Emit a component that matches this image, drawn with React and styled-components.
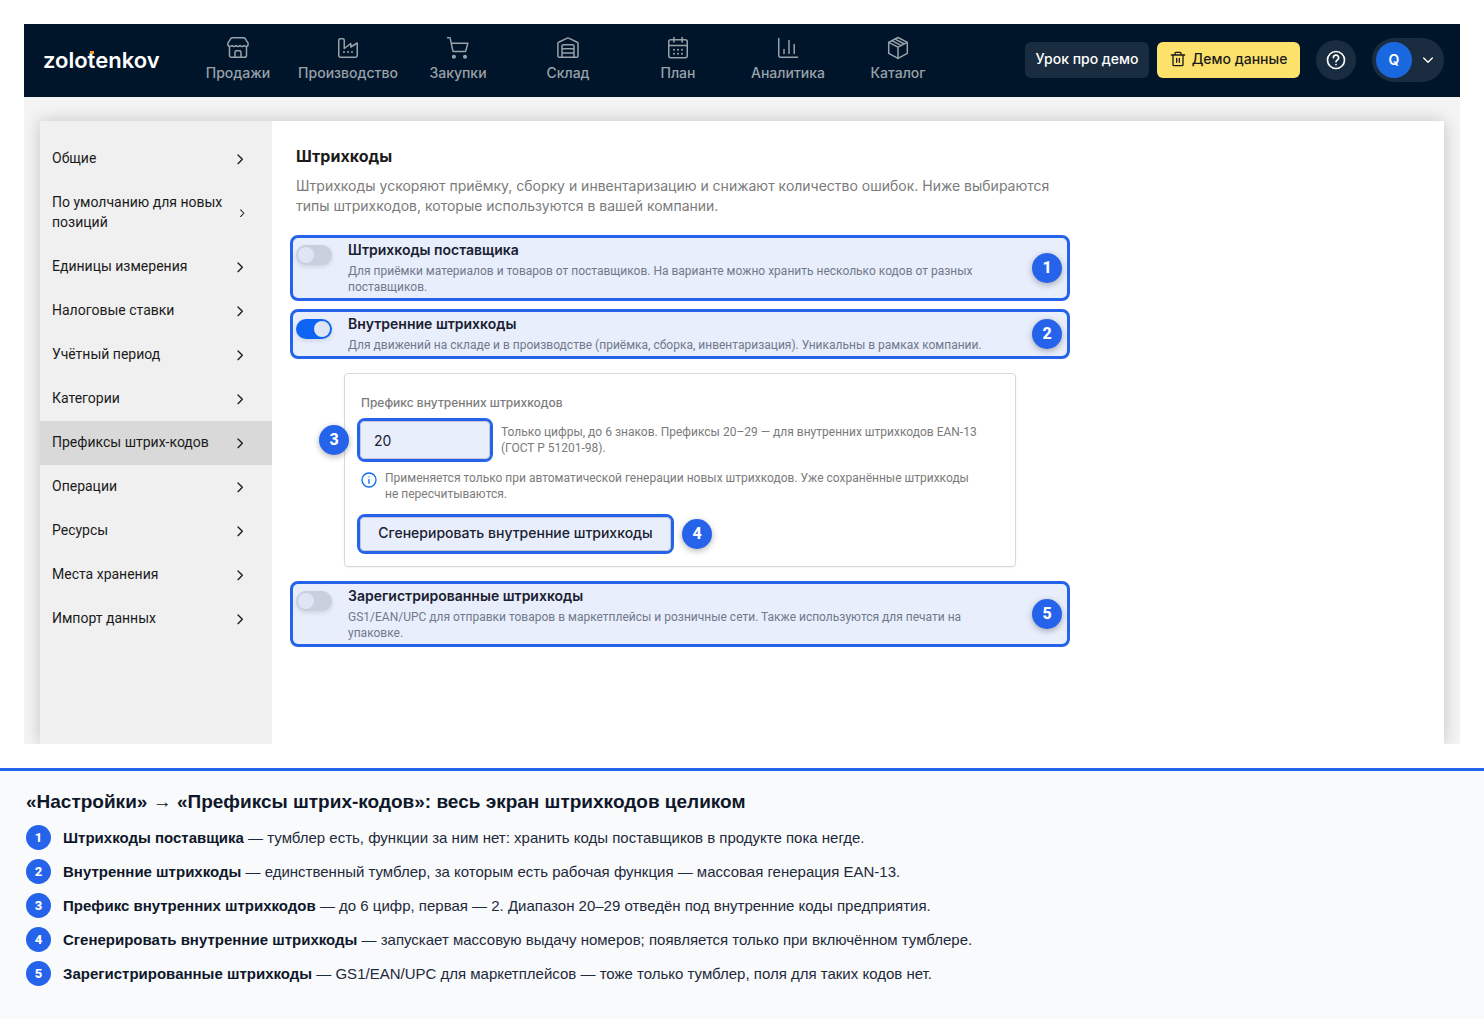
import React from "react";
import styled, { createGlobalStyle } from "styled-components";

const BLUE = "#2563eb";
const medium = `"Inter", "Roboto", sans-serif`;
const regular = `"Roboto", "Inter", sans-serif`;

const GlobalStyle = createGlobalStyle`
  *, *::before, *::after { box-sizing: border-box; }
  body { margin: 0; background: #fff; font-family: ${regular}; color: #1b1b1b; }
  h1, h2, p, ol, ul { margin: 0; padding: 0; font-weight: inherit; }
  ol, ul { list-style: none; }
  a { color: inherit; text-decoration: none; }
  button, input { font: inherit; color: inherit; margin: 0; }
  svg { display: block; flex: none; }
`;

const Page = styled.div`
  min-height: 100vh;
  display: flex;
  flex-direction: column;
`;

const Screen = styled.div`
  margin: 24px;
  overflow: hidden;
  background: #f4f4f4;
`;

const Header = styled.header`
  display: flex;
  align-items: center;
  height: 73px;
  padding: 0 16px 2px 19px;
  background: #001529;
`;

const Logo = styled.a`
  width: 140px;
  font: 600 22px/24px ${medium};
  color: #fff;
`;

const LogoT = styled.span`
  position: relative;
  &::before {
    content: "";
    position: absolute;
    left: 2px;
    top: 4px;
    width: 4px;
    height: 3px;
    background: #f0a030;
  }
`;

const Nav = styled.nav`
  display: flex;
  flex: 1;
  padding-bottom: 2px;
`;

const NavLink = styled.a`
  width: 110px;
  display: flex;
  flex-direction: column;
  align-items: center;
  gap: 4px;
  font: 500 14px/18px ${medium};
  color: #99a1a9;
`;

const Actions = styled.div`
  display: flex;
  align-items: center;
  gap: 16px;
`;

const ActionPair = styled.div`
  display: flex;
  gap: 8px;
`;

const HeaderButton = styled.button`
  display: flex;
  align-items: center;
  justify-content: center;
  gap: 6px;
  min-width: ${(p) => (p.$accent ? 143 : 124)}px;
  height: 36px;
  padding: 0 8px 2px;
  border: 0;
  border-radius: 6px;
  font: 500 14px/20px ${medium};
  white-space: nowrap;
  background: ${(p) => (p.$accent ? "#fce16a" : "#1a2c3f")};
  color: ${(p) => (p.$accent ? "#1b1b1b" : "#fff")};
`;

const HelpButton = styled.button`
  display: grid;
  place-items: center;
  width: 40px;
  height: 40px;
  padding: 0;
  border: 0;
  border-radius: 50%;
  background: #1a2c3f;
  color: #fff;
`;

const Profile = styled.button`
  display: flex;
  align-items: center;
  gap: 8px;
  width: 72px;
  height: 44px;
  padding: 0 4px;
  border: 0;
  border-radius: 22px;
  background: #1a2c3f;
  color: #fff;
`;

const Avatar = styled.span`
  display: grid;
  place-items: center;
  width: 36px;
  height: 36px;
  border-radius: 50%;
  background: #1a68df;
  font: 600 14px/20px ${medium};
`;

const Sheet = styled.div`
  display: flex;
  margin: 24px 16px 0;
  background: #fff;
  box-shadow: 0 0 16px rgba(0, 0, 0, 0.2);
`;

const Sidebar = styled.nav`
  flex: none;
  width: 232px;
  padding: 16px 0 103px;
  background: #f0f0f0;
`;

const SideLink = styled.a`
  display: flex;
  align-items: center;
  justify-content: space-between;
  gap: 8px;
  padding: 11px 24px 13px 12px;
  font-size: 14px;
  line-height: 20px;
  background: ${(p) => (p.$active ? "#d9d9d9" : "transparent")};
  svg { flex: 0 1 auto; min-width: 0; margin-top: 2px; }
`;

const Main = styled.main`
  flex: 1;
  min-width: 0;
  padding: 23px 18px;
`;

const Column = styled.div`
  max-width: 780px;
`;

const Intro = styled.div`
  padding: 0 6px 19px;
`;

const Heading = styled.h1`
  font: 700 16px/24px ${medium};
  color: #1b1b1b;
`;

const Lead = styled.p`
  padding-top: 8px;
  font: 400 14px/20px ${medium};
  color: #7b7b7b;
`;

const Option = styled.section`
  display: flex;
  align-items: flex-start;
  gap: 16px;
  padding: 2px 5px 3px 3px;
  margin-bottom: ${(p) => p.$gap || 0}px;
  border: 3px solid ${BLUE};
  border-radius: 8px;
  background: #e8eefc;
`;

const Toggle = styled.input`
  appearance: none;
  flex: none;
  display: flex;
  width: 36px;
  height: 20px;
  padding: 2px;
  margin-top: 5px;
  border-radius: 10px;
  background: ${(p) => (p.defaultChecked ? "#0d63f2" : "#c9cfdc")};
  justify-content: ${(p) => (p.defaultChecked ? "flex-end" : "flex-start")};
  box-shadow: 0 2px 4px rgba(0, 21, 41, 0.12);
  &::before {
    content: "";
    width: 16px;
    height: 16px;
    border-radius: 50%;
    background: #dee5f4;
  }
`;

const OptionText = styled.div`
  flex: 1;
`;

const OptionTitle = styled.label`
  display: block;
  font: 600 14px/20px ${medium};
  color: #1a2130;
`;

const OptionNote = styled.p`
  padding-top: 3px;
  font-size: 12px;
  line-height: 16px;
  color: #71798a;
`;

const Badge = styled.span`
  flex: none;
  display: grid;
  place-items: center;
  width: ${(p) => (p.$small ? 25 : 30)}px;
  height: ${(p) => (p.$small ? 25 : 30)}px;
  border-radius: 50%;
  background: ${BLUE};
  color: #fff;
  font: 800 ${(p) => (p.$small ? "13px/20px" : "16px/20px")} ${regular};
  box-shadow: ${(p) => (p.$small ? "none" : "0 2px 6px rgba(0, 0, 0, 0.3)")};
  align-self: ${(p) => (p.$small ? "auto" : "center")};
`;

const LeftBadge = styled(Badge)`
  position: absolute;
  right: calc(100% + 11px);
  top: 4px;
`;

const Panel = styled.div`
  margin: 14px 54px;
  padding: 20px 12px 12px;
  border: 1px solid #d9d9d9;
  border-radius: 4px;
  box-shadow: 0 1px 2px rgba(0, 0, 0, 0.06);
  color: #7b7b7b;
  font-size: 12px;
  line-height: 16px;
`;

const FieldLabel = styled.label`
  display: block;
  padding: 0 4px 6px;
  font: 500 12px/18px ${medium};
`;

const FieldRow = styled.div`
  display: flex;
  align-items: center;
  gap: 8px;
`;

const Marked = styled.div`
  position: relative;
  border: 3px solid ${BLUE};
  border-radius: 8px;
  background: #e8eefc;
`;

const PrefixInput = styled.input`
  display: block;
  width: 130px;
  height: 38px;
  padding: 0 13px;
  border: 1px solid #c2c8d8;
  border-radius: 4px;
  background: transparent;
  font: 400 14px/20px ${medium};
  color: #1a2130;
  outline: 0;
`;

const GenerateButton = styled.button`
  display: block;
  height: 34px;
  min-width: 311px;
  padding: 0 16px 2px;
  border: 1px solid #c2c8d8;
  border-radius: 4px;
  background: transparent;
  font: 500 14px/20px ${medium};
  color: #1a2130;
`;

const InfoRow = styled.div`
  display: flex;
  gap: 8px;
  padding: 8px 28px 12px 4px;
  color: #7b7b7b;
  svg { margin-top: 2px; color: #0d6bf2; }
`;

const Legend = styled.footer`
  flex: 1;
  padding: 18px 26px 32px;
  border-top: 3px solid ${BLUE};
  background: #f8fafc;
  font-family: "Liberation Sans", Arial, sans-serif;
  color: #0f172a;
`;

const LegendTitle = styled.h2`
  font-size: 19px;
  line-height: 26px;
  font-weight: 700;
`;

const Arrow = styled.span`
  font-weight: 400;
`;

const LegendList = styled.ol`
  display: grid;
  gap: 9px;
  padding-top: 10px;
`;

const LegendItem = styled.li`
  display: flex;
  align-items: center;
  gap: 12px;
  font-size: 15px;
  line-height: 22px;
  color: #1e293b;
  b { color: #0f172a; }
`;

function Icon({ size = 24, sw = 1.5, children }) {
  return (
    <svg width={size} height={size} viewBox="0 0 24 24" fill="none" stroke="currentColor" strokeWidth={sw} strokeLinecap="round" strokeLinejoin="round" aria-hidden="true">
      {children}
    </svg>
  );
}

const NAV = [
  ["Продажи", <><path d="M6.200 1.700h11.600c.5 0 .9.200 1.200.6l3.100 4.900v1.300c0 1.100-.9 1.900-2 1.900s-1.700-.6-2-.9c-.4.500-1.100.9-2 .9s-1.700-.4-2.100-.9c-.4.500-1.100.9-2 .9s-1.600-.4-2-.9c-.4.500-1.200.9-2.100.9s-1.600-.4-2-.9c-.3.300-.9.900-2 .9s-2-.8-2-1.900V7.200L5 2.300c.3-.4.700-.6 1.200-.6z" /><path d="M3.500 11v8.500a1.800 1.800 0 0 0 1.800 1.800h13.400a1.800 1.800 0 0 0 1.800-1.800V11M9 21v-5a1.300 1.300 0 0 1 1.300-1.300h3.400A1.300 1.300 0 0 1 15 16v5" /></>],
  ["Производство", <><path d="M2.750 19.500V4.300a1.500 1.500 0 0 1 1.500-1.500h2.500a1.500 1.500 0 0 1 1.500 1.500V12.500l6.500-5V11l6.500-4v12.500a1.800 1.800 0 0 1-1.800 1.800H4.550a1.800 1.800 0 0 1-1.800-1.800z" /><path d="M8 16h.01M12 16h.01M16 16h.01" strokeWidth="2" /></>],
  ["Закупки", <><path d="M1.500 1.750h1.800c.5 0 .9.3 1 .8l2.500 12.200c.1.500.5.800 1 .8h11c.5 0 .9-.3 1-.8l2.100-7.600H5.200" /><circle cx="7.900" cy="20.800" r="1.300" fill="currentColor" /><circle cx="19" cy="20.800" r="1.300" fill="currentColor" /></>],
  ["Склад", <><path d="M1.900 20V7.300c0-.5.2-.9.700-1.100l8.700-4.100c.4-.2.900-.2 1.300 0l8.700 4.100c.5.200.7.600.7 1.100V20c0 .8-.5 1.300-1.300 1.300H3.200c-.8 0-1.300-.5-1.300-1.300z" /><path d="M6 21V10c0-.8.5-1.300 1.300-1.300h9.400c.8 0 1.300.5 1.300 1.300v11M6 12.700h12M6 17h12" /></>],
  ["План", <><rect x="2.750" y="3.750" width="18.500" height="18" rx="2" /><path d="M2.750 9.500h18.500M7.900 1.500v4.500M16.100 1.500v4.500" /><path d="M8 13.700h.01M12 13.700h.01M16 13.700h.01M8 17.700h.01M12 17.700h.01M16 17.700h.01" strokeWidth="2" /></>],
  ["Аналитика", <path d="M2.750 2.500v17a1.800 1.800 0 0 0 1.800 1.800h17M8 17.500v-4M13 17.500v-13M18.200 17.500v-9" />],
  ["Каталог", <><path d="M12 1.500l9.300 4.900v11L12 22.400l-9.300-5v-11z" /><path d="M2.700 6.400l9.300 4.800 9.300-4.800M12 11.200v11.200M5.800 4.700l9.400 4.900M9 3.100l9.300 4.900" /></>],
];

const SECTIONS = [
  "Общие", "По умолчанию для новых позиций", "Единицы измерения", "Налоговые ставки", "Учётный период", "Категории",
  "Префиксы штрих-кодов", "Операции", "Ресурсы", "Места хранения", "Импорт данных",
];

const LEGEND = [
  ["Штрихкоды поставщика", "тумблер есть, функции за ним нет: хранить коды поставщиков в продукте пока негде."],
  ["Внутренние штрихкоды", "единственный тумблер, за которым есть рабочая функция — массовая генерация EAN-13."],
  ["Префикс внутренних штрихкодов", "до 6 цифр, первая — 2. Диапазон 20–29 отведён под внутренние коды предприятия."],
  ["Сгенерировать внутренние штрихкоды", "запускает массовую выдачу номеров; появляется только при включённом тумблере."],
  ["Зарегистрированные штрихкоды", "GS1/EAN/UPC для маркетплейсов — тоже только тумблер, поля для таких кодов нет."],
];

function BarcodeOption({ id, n, title, note, on, gap }) {
  return (
    <Option $gap={gap}>
      <Toggle type="checkbox" role="switch" id={id} defaultChecked={on} />
      <OptionText>
        <OptionTitle htmlFor={id}>{title}</OptionTitle>
        <OptionNote>{note}</OptionNote>
      </OptionText>
      <Badge>{n}</Badge>
    </Option>
  );
}

export default function App() {
  return (
    <Page>
      <GlobalStyle />
      <Screen>
        <Header>
          <Logo href="#">zolo<LogoT>t</LogoT>enkov</Logo>
          <Nav>
            {NAV.map(([label, art]) => (
              <NavLink href="#" key={label}><Icon>{art}</Icon>{label}</NavLink>
            ))}
          </Nav>
          <Actions>
            <ActionPair>
              <HeaderButton type="button">Урок про демо</HeaderButton>
              <HeaderButton type="button" $accent>
                <Icon size={16} sw={2}>
                  <path d="M2 6h20M7.500 6V3.500A1.500 1.500 0 0 1 9 2h6a1.500 1.500 0 0 1 1.500 1.500V6M4.500 6v14.500A1.500 1.500 0 0 0 6 22h12a1.500 1.500 0 0 0 1.500-1.500V6M10 11v6M14 11v6" />
                </Icon>
                Демо данные
              </HeaderButton>
            </ActionPair>
            <HelpButton type="button" aria-label="?">
              <Icon size={20} sw={2}>
                <circle cx="12" cy="12" r="10.200" />
                <path d="M8.900 9.300a3.100 3.100 0 1 1 4.600 2.700c-1 .6-1.500 1-1.500 2.200M12 17.500v.2" />
              </Icon>
            </HelpButton>
            <Profile type="button">
              <Avatar>Q</Avatar>
              <Icon size={16} sw={2}><path d="M5.500 9l6.500 6.500L18.500 9" /></Icon>
            </Profile>
          </Actions>
        </Header>
        <Sheet>
          <Sidebar>
            {SECTIONS.map((s) => (
              <SideLink href="#" key={s} $active={s === "Префиксы штрих-кодов"}>
                {s}
                <Icon size={16} sw={2}><path d="M9 6l6.500 6.500L9 19" /></Icon>
              </SideLink>
            ))}
          </Sidebar>
          <Main>
            <Column>
              <Intro>
                <Heading>Штрихкоды</Heading>
                <Lead>Штрихкоды ускоряют приёмку, сборку и инвентаризацию и снижают количество ошибок. Ниже выбираются типы штрихкодов, которые используются в вашей компании.</Lead>
              </Intro>
              <BarcodeOption id="supplier" n={1} gap={8} title="Штрихкоды поставщика" note="Для приёмки материалов и товаров от поставщиков. На варианте можно хранить несколько кодов от разных поставщиков." />
              <BarcodeOption id="internal" n={2} on title="Внутренние штрихкоды" note="Для движений на складе и в производстве (приёмка, сборка, инвентаризация). Уникальны в рамках компании." />
              <Panel>
                <FieldLabel htmlFor="prefix">Префикс внутренних штрихкодов</FieldLabel>
                <FieldRow>
                  <Marked>
                    <PrefixInput id="prefix" defaultValue="20" />
                    <LeftBadge>3</LeftBadge>
                  </Marked>
                  <p>Только цифры, до 6 знаков. Префиксы 20–29 — для внутренних штрихкодов EAN-13 (ГОСТ Р 51201-98).</p>
                </FieldRow>
                <InfoRow>
                  <Icon size={16} sw={2}><circle cx="12" cy="12" r="10.500" /><path d="M12 11v6M12 7.200v.1" /></Icon>
                  <p>Применяется только при автоматической генерации новых штрихкодов. Уже сохранённые штрихкоды не пересчитываются.</p>
                </InfoRow>
                <FieldRow>
                  <Marked><GenerateButton type="button">Сгенерировать внутренние штрихкоды</GenerateButton></Marked>
                  <Badge>4</Badge>
                </FieldRow>
              </Panel>
              <BarcodeOption id="registered" n={5} title="Зарегистрированные штрихкоды" note="GS1/EAN/UPC для отправки товаров в маркетплейсы и розничные сети. Также используются для печати на упаковке." />
            </Column>
          </Main>
        </Sheet>
      </Screen>
      <Legend>
        <LegendTitle>«Настройки» <Arrow>→</Arrow> «Префиксы штрих-кодов»: весь экран штрихкодов целиком</LegendTitle>
        <LegendList>
          {LEGEND.map(([name, text], i) => (
            <LegendItem key={name}>
              <Badge $small>{i + 1}</Badge>
              <span><b>{name}</b> — {text}</span>
            </LegendItem>
          ))}
        </LegendList>
      </Legend>
    </Page>
  );
}
